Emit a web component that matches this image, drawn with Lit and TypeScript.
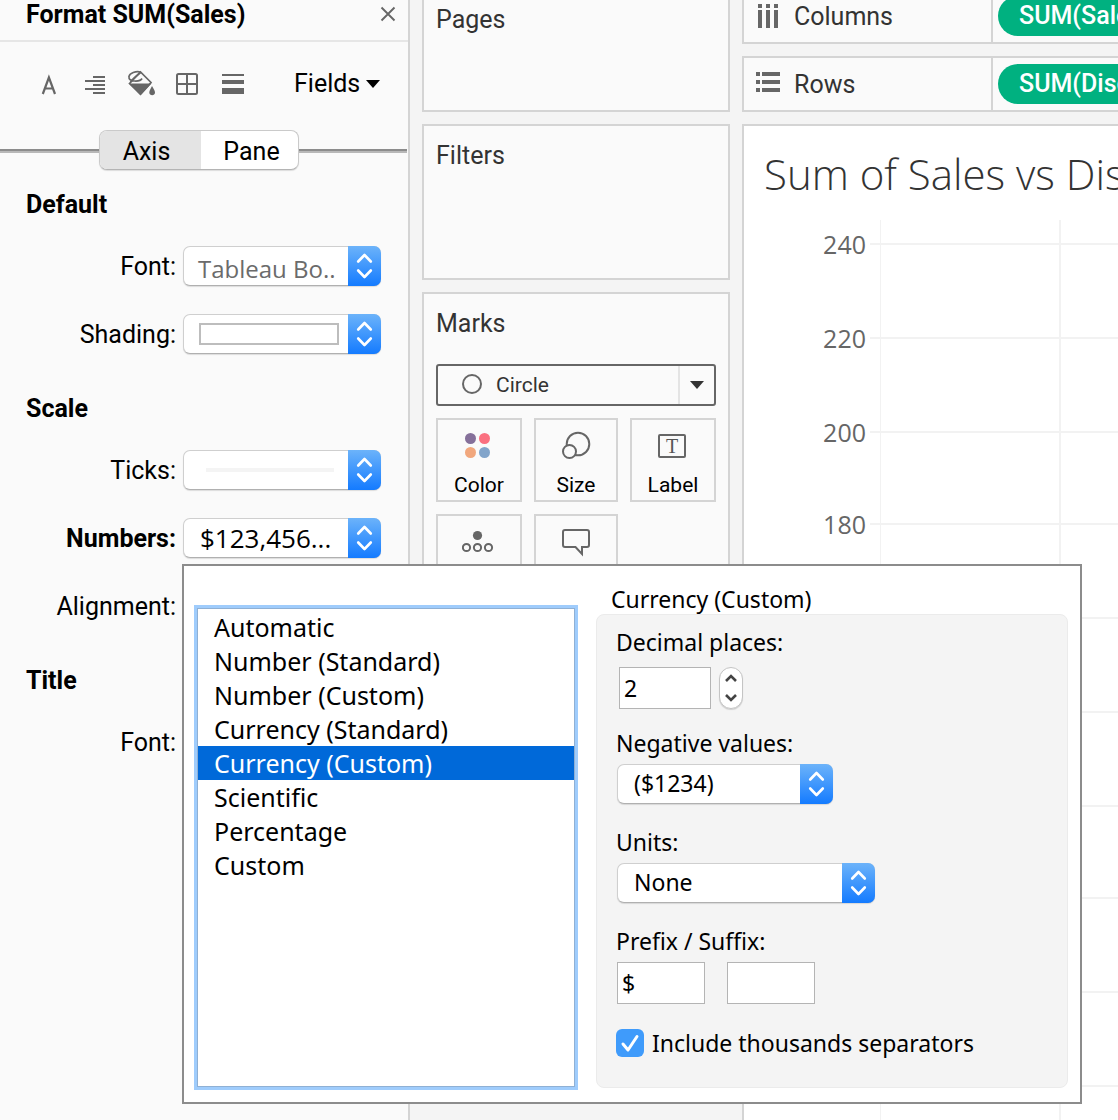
import { LitElement, html, svg, css, nothing } from "lit";
import { customElement, property, state } from "lit/decorators.js";

/* Blue cap with the up and down chevrons, at the right end of every pop-up control. */
const popCap = html`<svg class="cap" viewBox="0 0 33 40" aria-hidden="true">
  <defs>
    <linearGradient id="cap-fill" x1="0" y1="0" x2="0" y2="1">
      <stop offset="0" stop-color="#6cb3fa" />
      <stop offset="1" stop-color="#147bff" />
    </linearGradient>
  </defs>
  <path d="M0 0H26a7 7 0 0 1 7 7V33a7 7 0 0 1-7 7H0Z" fill="url(#cap-fill)" />
  <path d="M10.200 15.500L16.500 9L22.800 15.500M10.200 24.500L16.500 31L22.800 24.500" fill="none" stroke="#fff"
    stroke-width="2.600" stroke-linecap="round" stroke-linejoin="round" />
</svg>`;

const popStyles = css`
  .pop {
    position: relative;
    display: block;
    height: 40px;
  }
  .pop .face {
    box-sizing: border-box;
    display: flex;
    align-items: center;
    width: 100%;
    height: 40px;
    margin: 0;
    padding: 0 40px 2px 16px;
    border: 1px solid #cfcfcf;
    border-bottom-color: #b0b0b0;
    border-radius: 7px;
    background: #fff;
    box-shadow: 0 1px 1px rgba(0, 0, 0, 0.12);
    color: #000;
    font: inherit;
    text-align: left;
    white-space: nowrap;
    appearance: none;
    outline: none;
  }
  .pop .cap {
    position: absolute;
    top: 0;
    right: 0;
    width: 33px;
    height: 40px;
    pointer-events: none;
  }
`;

type Preview = "font" | "shade" | "tick" | "number" | "";

@customElement("format-pane")
class FormatPane extends LitElement {
  @state() tab = "Axis";

  static styles = [
    popStyles,
    css`
      :host {
        box-sizing: border-box;
        display: block;
        flex: 0 0 410px;
        border-right: 2px solid #d4d4d4;
        background: #fafafa;
        color: #000;
        font: 25px/32px Roboto, "Liberation Sans", sans-serif;
      }
      .head {
        display: flex;
        align-items: center;
        justify-content: space-between;
        height: 28px;
        padding: 0 10px 12px 26px;
        border-bottom: 2px solid #e6e6e6;
      }
      h1,
      h2 {
        margin: 0;
        font-size: inherit;
        font-weight: 700;
      }
      h1 {
        padding-top: 2px;
      }
      button {
        padding: 0;
        border: 0;
        background: none;
        color: inherit;
        font: inherit;
      }
      svg {
        display: block;
      }
      .tools {
        display: flex;
        align-items: center;
        gap: 16px;
        height: 84px;
        padding-left: 34px;
      }
      .tools .fields {
        display: flex;
        align-items: center;
        gap: 6px;
        margin-left: 30px;
      }
      .tabs {
        display: flex;
        align-items: center;
        height: 48px;
        margin-bottom: 2px;
      }
      .tabs::before,
      .tabs::after {
        content: "";
        flex: 0 1 99px;
        height: 2px;
        margin-top: 2px;
        border-bottom: 2px solid #b8b8b8;
        background: #8c8c8c;
      }
      .tabs::after {
        flex: 1;
        margin-right: 1px;
      }
      .seg {
        box-sizing: border-box;
        display: grid;
        grid-template-columns: 101px 97px;
        height: 40px;
        border: 1px solid #cacaca;
        border-bottom-color: #b4b4b4;
        border-radius: 8px;
        background: #fff;
        box-shadow: 0 1px 1px rgba(0, 0, 0, 0.12);
        overflow: hidden;
      }
      .seg button {
        padding: 4px 0 0 4px;
      }
      .seg button:first-child {
        padding: 4px 8px 0 0;
      }
      .seg button[aria-selected="true"] {
        background: #e4e4e4;
      }
      section {
        margin-bottom: 12px;
      }
      h2 {
        height: 56px;
        padding-left: 26px;
        line-height: 58px;
      }
      .row {
        display: grid;
        grid-template-columns: 176px 198px;
        align-items: center;
        gap: 7px;
        height: 68px;
      }
      .row label,
      .row .name {
        padding-top: 2px;
        text-align: right;
      }
      .row .strong {
        font-weight: 700;
      }
      .pop .shade-face,
      .pop .tick-face {
        padding: 0 0 0 15px;
      }
      .pop .font-face {
        padding: 6px 0 0 14px;
        color: #6b6b6b;
        font: 24px/32px "Open Sans", sans-serif;
      }
      .pop .number-face {
        padding: 0 0 0 16px;
        font: 26px/32px "Open Sans", sans-serif;
      }
      .shade {
        box-sizing: border-box;
        width: 140px;
        height: 22px;
        border: 2px solid #bdbdbd;
        background: #fff;
      }
      .tick {
        width: 128px;
        height: 4px;
        margin-left: 7px;
        background: #f4f4f4;
      }
    `,
  ];

  row(id: string, label: string, kind: Preview, text = "") {
    if (!kind) return html`<div class="row"><span class="name">${label}</span></div>`;
    const content =
      kind === "shade" || kind === "tick" ? html`<span class=${kind}></span>` : text;
    return html`<div class="row">
      <label for=${id} class=${kind === "number" ? "strong" : ""}>${label}</label>
      <div class="pop">
        <button id=${id} class="face ${kind}-face" aria-haspopup="dialog">${content}</button>
        ${popCap}
      </div>
    </div>`;
  }

  render() {
    return html`
      <header class="head">
        <h1>Format SUM(Sales)</h1>
        <button aria-label="Close">
          <svg width="20" height="20" viewBox="0 0 20 20">
            <path d="M3.500 3.500L16.500 16.500M16.500 3.500L3.500 16.500" stroke="#666" stroke-width="1.900" />
          </svg>
        </button>
      </header>
      <div class="tools">
        <button aria-label="Font">
          <svg width="30" height="30" viewBox="0 0 30 30">
            <path d="M8.800 25L14.900 8.500L21 25M10.900 19.500H18.900" fill="none" stroke="#666" stroke-width="2.200" />
          </svg>
        </button>
        <button aria-label="Alignment">
          <svg width="30" height="30" viewBox="0 0 30 30">
            <path d="M13 8H25M5 12H25M13 16H25M5 20H25M13 24H25" stroke="#666" stroke-width="2" />
          </svg>
        </button>
        <button aria-label="Shading">
          <svg width="30" height="30" viewBox="0 0 30 30">
            <path d="M3.500 14.500L14.500 3L25 13.500L14.500 25Z" fill="none" stroke="#666" stroke-width="1.700" />
            <path d="M3 14.500H25.500L14.500 26.500Z" fill="#666" />
            <path d="M14.500 3C10 1.800 3.500 4 3 7.500C2.500 10.500 5 11.800 8.500 12C12 12.200 15 11.500 16 9.500M14.500 3.500C11 6.500 7 9.500 4.500 13" fill="none" stroke="#666" stroke-width="1.700" />
            <path d="M26 17C27.300 19.500 29 21.500 29 23.500C29 27 23.300 27 23.300 23.500C23.300 21.500 24.800 19.500 26 17Z" fill="#666" />
          </svg>
        </button>
        <button aria-label="Borders">
          <svg width="30" height="30" viewBox="0 0 30 30">
            <rect x="5" y="5" width="20" height="20" rx="1.500" fill="none" stroke="#666" stroke-width="2" />
            <path d="M15 5V25M5 15H25" stroke="#666" stroke-width="2" />
          </svg>
        </button>
        <button aria-label="Lines">
          <svg width="30" height="30" viewBox="0 0 30 30">
            <path d="M4 5H26V7H4ZM4 11H26V15H4ZM4 19H26V25H4Z" fill="#666" />
          </svg>
        </button>
        <button class="fields">
          Fields
          <svg width="14" height="8" viewBox="0 0 14 8"><path d="M0 0H14L7 8Z" fill="#000" /></svg>
        </button>
      </div>
      <div class="tabs">
        <div class="seg" role="tablist">
          ${["Axis", "Pane"].map(
            (t) => html`<button role="tab" aria-selected=${this.tab === t ? "true" : "false"}
              @click=${() => (this.tab = t)}>${t}</button>`
          )}
        </div>
      </div>
      <section>
        <h2>Default</h2>
        ${this.row("font", "Font:", "font", "Tableau Bo..")} ${this.row("shading", "Shading:", "shade")}
      </section>
      <section>
        <h2>Scale</h2>
        ${this.row("ticks", "Ticks:", "tick")} ${this.row("numbers", "Numbers:", "number", "$123,456...")}
        ${this.row("align", "Alignment:", "")}
      </section>
      <section>
        <h2>Title</h2>
        ${this.row("title-font", "Font:", "")}
      </section>
    `;
  }
}

@customElement("card-column")
class CardColumn extends LitElement {
  static styles = css`
    :host {
      display: flex;
      flex: 0 0 308px;
      flex-direction: column;
      gap: 12px;
      color: #333;
      font: 25px/32px Roboto, "Liberation Sans", sans-serif;
    }
    .card {
      box-sizing: border-box;
      min-height: 156px;
      padding: 14px 12px;
      border: 2px solid #d4d4d4;
      background: #fafafa;
    }
    .card.short {
      min-height: 124px;
    }
    .card.marks {
      min-height: 600px;
    }
    h2 {
      margin: 0;
      font-size: inherit;
      font-weight: 400;
    }
    svg {
      display: block;
    }
    button {
      margin: 0;
      padding: 0;
      font: 21px/28px Roboto, "Liberation Sans", sans-serif;
    }
    .type {
      display: flex;
      align-items: center;
      width: 100%;
      height: 42px;
      margin: 24px 0 12px;
      border: 2px solid #666;
      border-radius: 3px;
      background: #fafafa;
      color: #333;
    }
    .type .ring {
      margin: 0 13px 0 23px;
      padding-bottom: 2px;
    }
    .type .arrow {
      display: grid;
      place-items: center;
      width: 34px;
      height: 38px;
      margin-left: auto;
      border-left: 2px solid #e4e4e4;
    }
    .shelf {
      display: grid;
      grid-template-columns: 86px 84px 86px;
      gap: 12px;
    }
    .shelf button {
      display: flex;
      flex-direction: column;
      align-items: center;
      height: 84px;
      padding-top: 9px;
      border: 2px solid #d4d4d4;
      background: #fafafa;
      color: #000;
    }
    .shelf svg {
      margin-bottom: 8px;
    }
    .glyph {
      font: 20px "Liberation Serif", serif;
    }
  `;

  render() {
    const icon = (body: unknown) => html`<svg width="34" height="34" viewBox="0 0 34 34">${body}</svg>`;
    const marks = [
      {
        label: "Color",
        body: svg`<circle cx="8.500" cy="9.500" r="5.500" fill="#85709a"/><circle cx="22.500" cy="9.500" r="5.500" fill="#fa7080"/>
          <circle cx="8.500" cy="23.500" r="5.500" fill="#f1a77d"/><circle cx="22.500" cy="23.500" r="5.500" fill="#82a4ca"/>`,
      },
      {
        label: "Size",
        body: svg`<circle cx="19" cy="15" r="11.300" fill="none" stroke="#666" stroke-width="2"/>
          <circle cx="10.500" cy="22.500" r="6.500" fill="#fafafa" stroke="#666" stroke-width="2"/>`,
      },
      {
        label: "Label",
        body: svg`<rect x="3" y="6" width="26" height="22" rx="1" fill="none" stroke="#666" stroke-width="2"/>
          <text class="glyph" x="16" y="24" text-anchor="middle" fill="#555">T</text>`,
      },
      {
        label: "Detail",
        body: svg`<circle cx="15.500" cy="10.500" r="4.600" fill="#666"/>
          <g fill="none" stroke="#666" stroke-width="2"><circle cx="4.500" cy="22.500" r="3.600"/><circle cx="15.500" cy="22.500" r="3.600"/><circle cx="26.500" cy="22.500" r="3.600"/></g>`,
      },
      {
        label: "Tooltip",
        body: svg`<path d="M6 5H28a2 2 0 0 1 2 2V20a2 2 0 0 1-2 2H23V29L16.500 22H6a2 2 0 0 1-2-2V7a2 2 0 0 1 2-2Z" fill="none" stroke="#666" stroke-width="2"/>`,
      },
    ];
    return html`
      <section class="card short"><h2>Pages</h2></section>
      <section class="card"><h2>Filters</h2></section>
      <section class="card marks">
        <h2>Marks</h2>
        <button class="type" aria-haspopup="listbox">
          <svg class="ring" width="22" height="22" viewBox="0 0 22 22">
            <circle cx="11" cy="11" r="9" fill="none" stroke="#666" stroke-width="2" />
          </svg>
          Circle
          <span class="arrow">
            <svg width="14" height="8" viewBox="0 0 14 8"><path d="M0 0H14L7 8Z" fill="#333" /></svg>
          </span>
        </button>
        <div class="shelf">${marks.map((m) => html`<button>${icon(m.body)}${m.label}</button>`)}</div>
      </section>
    `;
  }
}

@customElement("sheet-view")
class SheetView extends LitElement {
  static styles = css`
    :host {
      display: flex;
      flex: 1;
      flex-direction: column;
      gap: 12px;
      min-width: 0;
      overflow: hidden;
      color: #333;
      font: 25px/32px Roboto, "Liberation Sans", sans-serif;
    }
    .shelf {
      box-sizing: border-box;
      display: flex;
      height: 56px;
      border: 2px solid #d4d4d4;
      border-right: 0;
      background: #fafafa;
    }
    .shelf .name {
      box-sizing: border-box;
      display: flex;
      flex: 0 0 249px;
      align-items: center;
      gap: 14px;
      padding-left: 12px;
      border-right: 2px solid #d4d4d4;
    }
    .shelf .name span {
      padding-top: 2px;
    }
    .pill {
      flex: 0 0 180px;
      height: 40px;
      margin: 6px 0 0 5px;
      padding: 0 0 0 21px;
      border: 0;
      border-radius: 20px;
      background: #00b180;
      color: #fff;
      font: 500 25px/32px Roboto, "Liberation Sans", sans-serif;
      text-align: left;
      white-space: nowrap;
    }
    .sheet {
      flex: 1;
      border: 2px solid #d4d4d4;
      border-width: 2px 0 0 2px;
      background: #fff;
      font-family: "Open Sans", "Noto Sans", sans-serif;
    }
    h2 {
      margin: 0;
      padding: 20px 0 18px 20px;
      font-size: 42px;
      line-height: 56px;
      font-weight: 300;
      white-space: nowrap;
    }
    .chart {
      display: block;
      width: 100%;
      height: 900px;
      font-size: 25px;
    }
  `;

  shelf(name: string, pill: string, icon: unknown) {
    return html`<div class="shelf">
      <div class="name">
        <svg width="24" height="24" viewBox="0 0 24 24" fill="#666">${icon}</svg>
        <span>${name}</span>
      </div>
      <button class="pill">${pill}</button>
    </div>`;
  }

  render() {
    const halfStep = 187 / 4;
    const ticks = Array.from({ length: 10 }, (_, i) => ({
      value: 240 - i * 20,
      y: 24 + Math.round(i * halfStep) * 2,
    }));
    return html`
      ${this.shelf(
        "Columns",
        "SUM(Sales)",
        svg`<path d="M2 0h4v4H2zM10 0h4v4h-4zM18 0h4v4h-4zM2 6h4v18H2zM10 6h4v18h-4zM18 6h4v18h-4z"/>`
      )}
      ${this.shelf(
        "Rows",
        "SUM(Discount)",
        svg`<path d="M0 0h4v4H0zM0 8h4v4H0zM0 16h4v4H0zM6 0h18v4H6zM6 8h18v4H6zM6 16h18v4H6z"/>`
      )}
      <article class="sheet">
        <h2>Sum of Sales vs Discount</h2>
        <svg class="chart" role="img" aria-label="Scatter plot of sales against discount">
          <rect x="136" y="0" width="1" height="900" fill="#f2f2f2" />
          <rect x="315" y="0" width="2" height="900" fill="#f2f2f2" />
          ${ticks.map(
            (t) => svg`<rect x="126" y=${t.y - 1} width="100%" height="2" fill="#f2f2f2"/>
              <text x="122" y=${t.y + 10} text-anchor="end" fill="#666">${t.value}</text>`
          )}
        </svg>
      </article>
    `;
  }
}

@customElement("number-format-dialog")
class NumberFormatDialog extends LitElement {
  @property() kind = "Currency (Custom)";
  @state() places = 2;

  static styles = [
    popStyles,
    css`
      :host {
        box-sizing: border-box;
        display: grid;
        grid-template-columns: 378px 1fr;
        gap: 21px;
        padding: 19px 12px 14px 13px;
        border: 2px solid #8c8c8c;
        background: #fff;
        color: #000;
        font: 23px/28px "Noto Sans", "Open Sans", sans-serif;
      }
      .list {
        box-sizing: border-box;
        margin: 23px 0 1px;
        padding: 1px 0 0;
        border: 1px solid #8fb0d4;
        border-radius: 0;
        outline: 3px solid #9fccfc;
        background: #fff;
        font: 25px/30px "Noto Sans", "Open Sans", sans-serif;
        overflow: hidden;
      }
      .list option {
        box-sizing: border-box;
        height: 34px;
        min-height: 34px;
        padding: 0 0 4px 16px;
        color: #000;
        line-height: 30px;
      }
      .list option:checked {
        background: #0069d9 linear-gradient(#0069d9, #0069d9);
        color: #fff;
      }
      .panel {
        display: flex;
        flex-direction: column;
        min-width: 0;
      }
      .caption {
        padding: 0 0 1px 15px;
      }
      .group {
        box-sizing: border-box;
        display: flex;
        flex: 1;
        flex-direction: column;
        align-items: flex-start;
        padding: 13px 19px;
        border: 1px solid #ebebeb;
        border-radius: 8px;
        background: #f4f4f4;
      }
      .line {
        display: flex;
        align-items: center;
        gap: 8px;
      }
      input[type="text"] {
        box-sizing: border-box;
        width: 88px;
        height: 42px;
        padding: 0 4px;
        border: 1px solid #b4b4b4;
        border-radius: 0;
        outline: none;
        background: #fff;
        color: #000;
        font: inherit;
      }
      .places {
        margin: 11px 0 20px 3px;
      }
      .places input[type="text"] {
        width: 92px;
      }
      .stepper {
        box-sizing: border-box;
        display: grid;
        width: 24px;
        height: 42px;
        border: 1px solid #c4c4c4;
        border-radius: 12px;
        background: #fff;
        box-shadow: 0 1px 1px rgba(0, 0, 0, 0.15);
      }
      .stepper button {
        display: grid;
        place-items: center;
        padding: 0;
        border: 0;
        background: none;
      }
      .pop.negative,
      .pop.units {
        width: 216px;
        margin: 7px 0 24px 1px;
      }
      .pop.units {
        width: 258px;
      }
      .affix {
        gap: 22px;
        margin: 7px 0 25px 1px;
      }
      .check input {
        width: 28px;
        height: 28px;
        margin: 0;
        border-radius: 6px;
        appearance: none;
        background: #3f9bfb;
      }
      .box {
        position: relative;
        display: grid;
      }
      .box svg {
        position: absolute;
        inset: 0;
        pointer-events: none;
      }
    `,
  ];

  render() {
    const kinds = [
      "Automatic",
      "Number (Standard)",
      "Number (Custom)",
      "Currency (Standard)",
      "Currency (Custom)",
      "Scientific",
      "Percentage",
      "Custom",
    ];
    const chevron = (d: string) => html`<svg width="12" height="8" viewBox="0 0 12 8">
      <path d=${d} fill="none" stroke="#444" stroke-width="2.600" />
    </svg>`;
    return html`
      <select class="list" size="13" aria-label="Number format"
        @change=${(e: Event) => (this.kind = (e.target as HTMLSelectElement).value)}>
        ${kinds.map((k) => html`<option ?selected=${k === this.kind}>${k}</option>`)}
      </select>
      <div class="panel">
        <div class="caption">${this.kind}</div>
        <div class="group">
          <label for="places">Decimal places:</label>
          <div class="line places">
            <input id="places" type="text" inputmode="numeric" .value=${String(this.places)} />
            <div class="stepper">
              <button aria-label="More places" @click=${() => this.places++}>${chevron("M1 7L6 2L11 7")}</button>
              <button aria-label="Fewer places" @click=${() => (this.places = Math.max(0, this.places - 1))}>
                ${chevron("M1 1L6 6L11 1")}
              </button>
            </div>
          </div>
          <label for="negative">Negative values:</label>
          <div class="pop negative">
            <select id="negative" class="face"><option>($1234)</option><option>-$1234</option></select>
            ${popCap}
          </div>
          <label for="units">Units:</label>
          <div class="pop units">
            <select id="units" class="face"><option>None</option><option>Thousands (K)</option></select>
            ${popCap}
          </div>
          <label for="prefix">Prefix / Suffix:</label>
          <div class="line affix">
            <input id="prefix" type="text" value="$" />
            <input type="text" aria-label="Suffix" />
          </div>
          <label class="line check">
            <span class="box">
              <input type="checkbox" checked />
              <svg width="28" height="28" viewBox="0 0 28 28">
                <path d="M7 15L12 21L21 7.500" fill="none" stroke="#fff" stroke-width="3" stroke-linecap="round" stroke-linejoin="round" />
              </svg>
            </span>
            Include thousands separators
          </label>
        </div>
      </div>
    `;
  }
}

@customElement("app-root")
class AppRoot extends LitElement {
  @state() dialogOpen = true;

  static styles = css`
    :host {
      display: block;
    }
    .app {
      position: relative;
      display: flex;
      height: 100vh;
      overflow: hidden;
      background: #f4f4f4;
    }
    .work {
      display: flex;
      flex: 1;
      gap: 12px;
      min-width: 0;
      margin: -12px 0 0 12px;
    }
    .dialog {
      position: absolute;
      top: 564px;
      left: 182px;
      width: 900px;
      min-height: 540px;
    }
  `;

  render() {
    return html`<main class="app">
      <format-pane></format-pane>
      <div class="work">
        <card-column></card-column>
        <sheet-view></sheet-view>
      </div>
      ${this.dialogOpen ? html`<number-format-dialog class="dialog"></number-format-dialog>` : nothing}
    </main>`;
  }
}
